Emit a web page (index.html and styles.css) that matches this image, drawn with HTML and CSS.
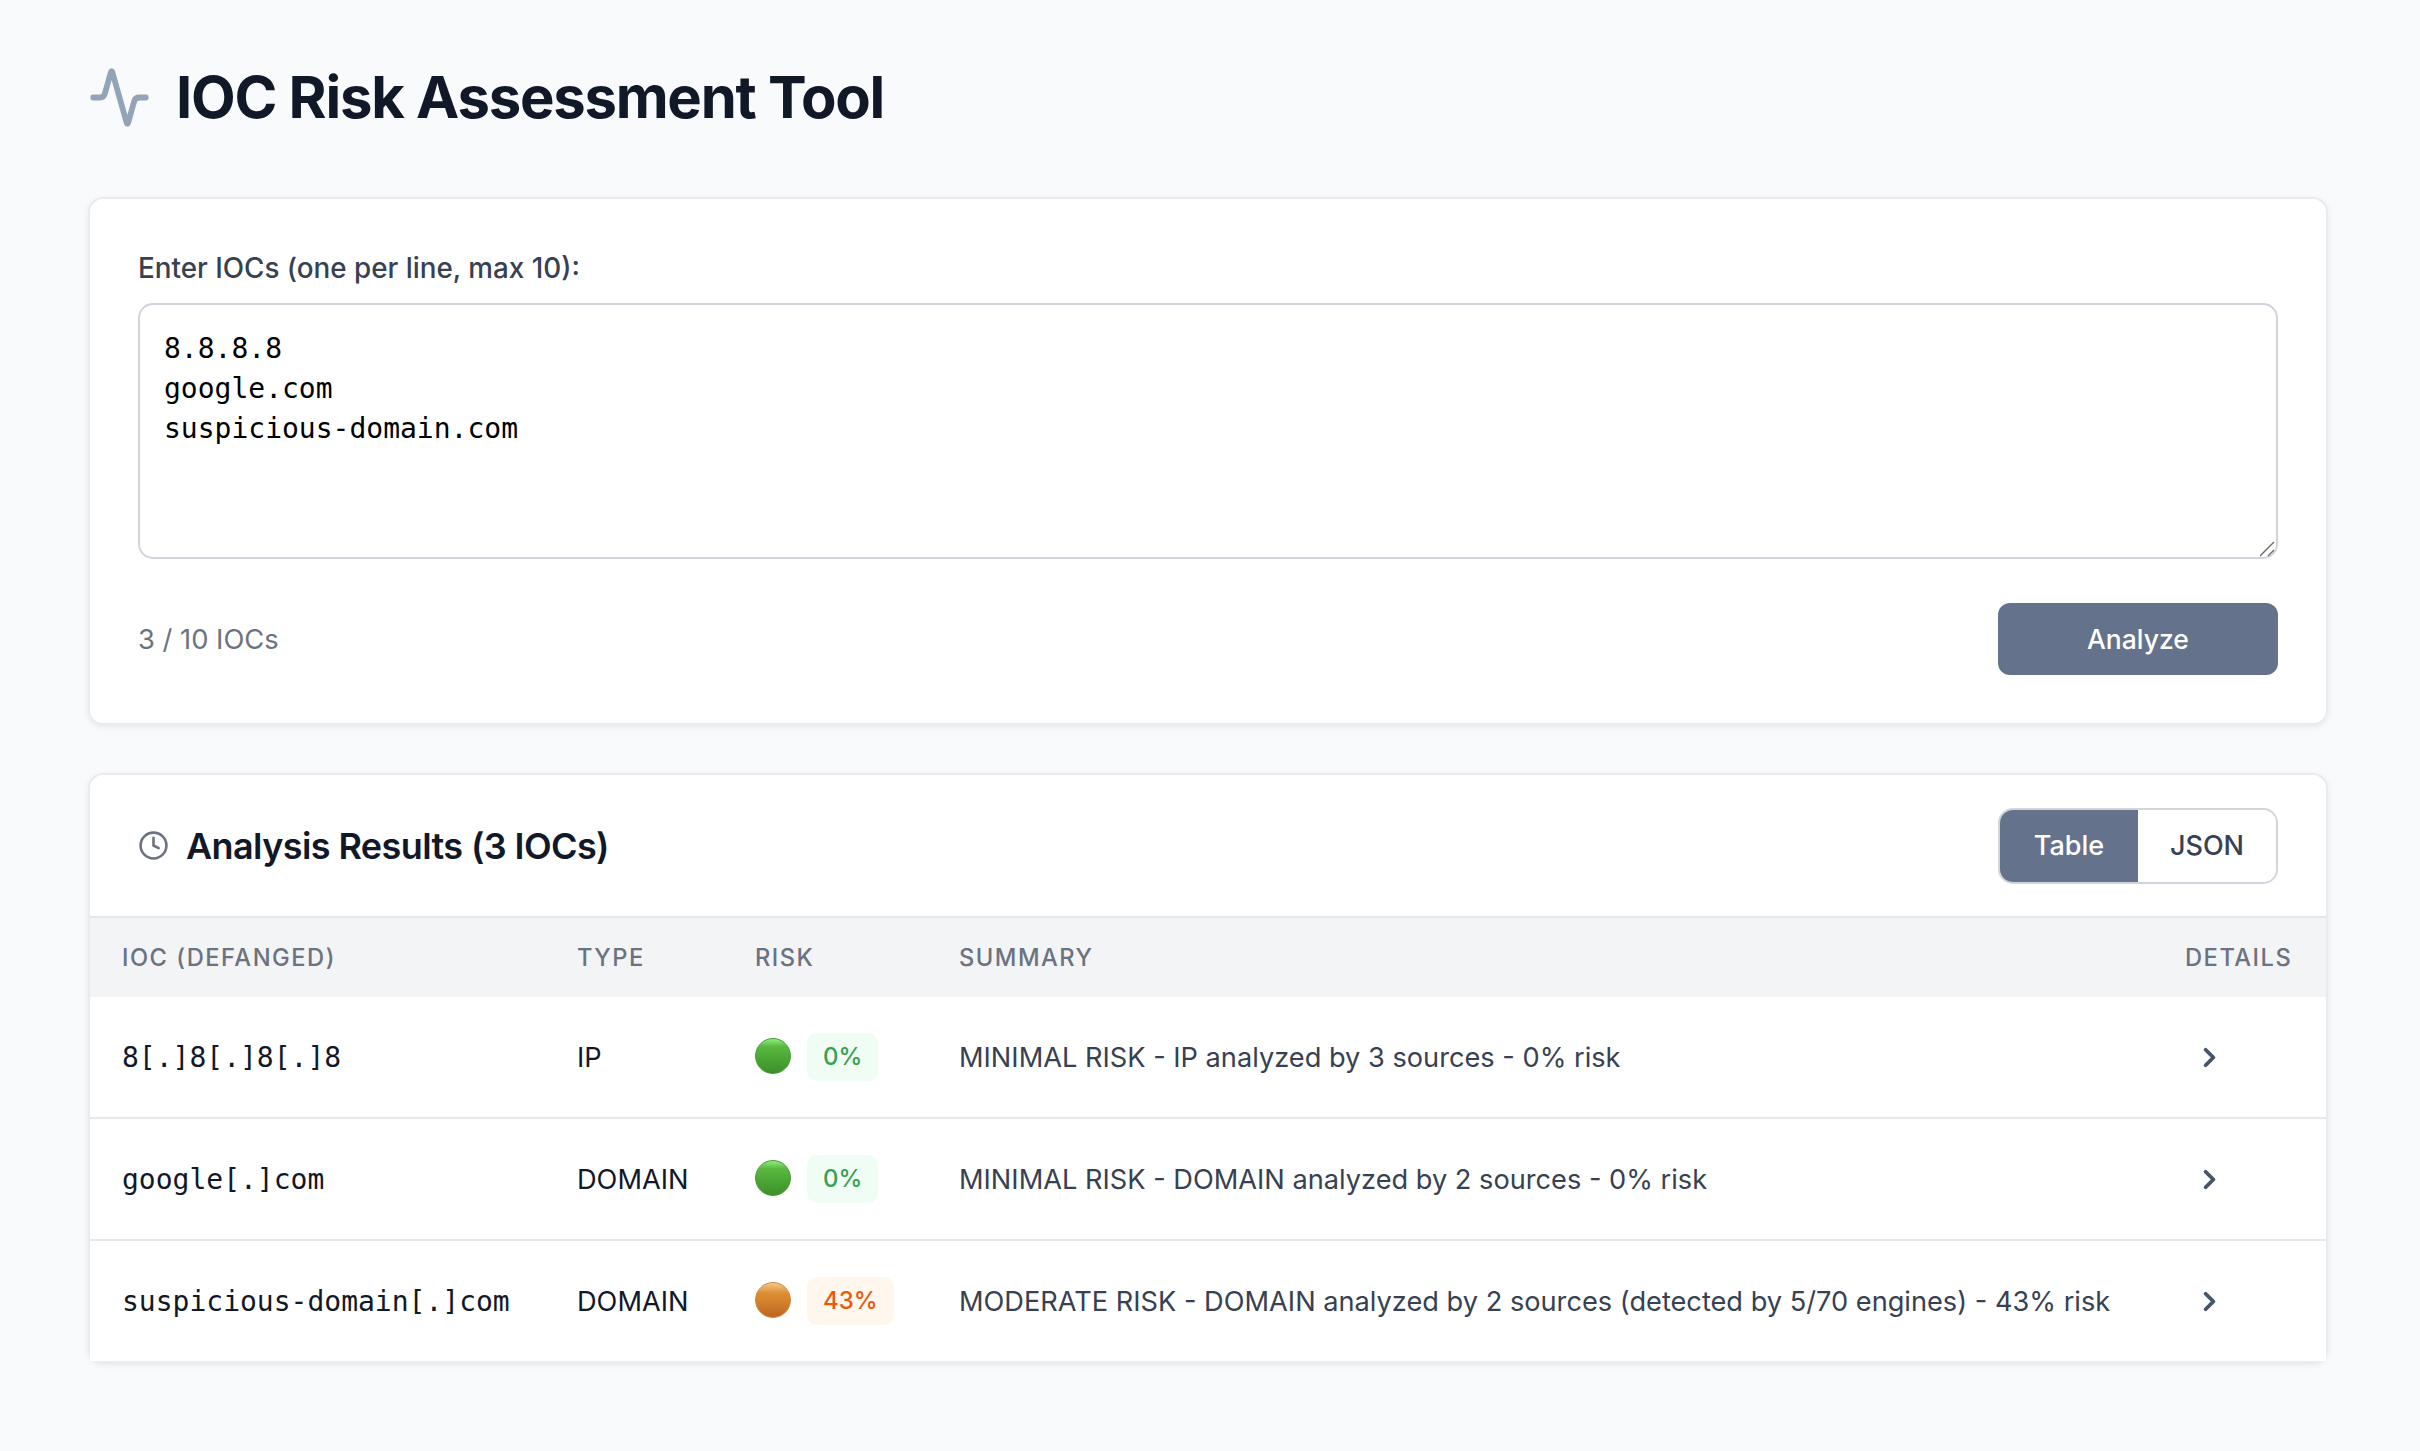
FILE: index.html
```html
<!DOCTYPE html>
<html lang="en">
  <head>
    <meta charset="UTF-8" />
    <meta name="viewport" content="width=device-width, initial-scale=1.0" />
    <title>IOC Risk Assessment Tool</title>
    <link rel="stylesheet" href="styles.css">
  </head>
  <body>
    <main class="page">
      <header class="page-header">
        <svg class="icon-pulse" viewBox="0 0 24 24" fill="none" stroke="currentColor" stroke-width="2.2" stroke-linecap="round" stroke-linejoin="round">
          <path d="M22 12h-2.48a2 2 0 0 0-1.93 1.46l-2.35 8.36a.25.25 0 0 1-.48 0L9.24 2.18a.25.25 0 0 0-.48 0l-2.35 8.36A2 2 0 0 1 4.49 12H2" />
        </svg>
        <h1>IOC Risk Assessment Tool</h1>
      </header>

      <section class="card card-input">
        <label class="input-label" for="iocs">Enter IOCs (one per line, max 10):</label>
        <div class="input-wrap">
          <textarea id="iocs" class="ioc-input" spellcheck="false">8.8.8.8
google.com
suspicious-domain.com</textarea>
          <svg class="resize-grip" viewBox="0 0 16 16" fill="none" stroke="#6b6b6b" stroke-width="1.4">
            <path d="M0 15 14 1M8 15l6-6" />
          </svg>
        </div>
        <div class="input-footer">
          <span class="ioc-count">3 / 10 IOCs</span>
          <button type="button" class="btn-analyze">Analyze</button>
        </div>
      </section>

      <section class="card card-results">
        <div class="results-header">
          <h2 class="results-title">
            <svg class="icon-clock" viewBox="0 0 24 24" fill="none" stroke="currentColor" stroke-width="2" stroke-linecap="round" stroke-linejoin="round">
              <circle cx="12" cy="12" r="10" />
              <polyline points="12 6 12 12 16 14" />
            </svg>
            Analysis Results (3 IOCs)
          </h2>
          <div class="view-toggle">
            <button type="button" class="toggle-btn active">Table</button>
            <button type="button" class="toggle-btn">JSON</button>
          </div>
        </div>

        <table class="results-table">
          <colgroup>
            <col class="col-ioc" />
            <col class="col-type" />
            <col class="col-risk" />
            <col class="col-summary" />
            <col class="col-details" />
          </colgroup>
          <thead>
            <tr>
              <th>IOC (Defanged)</th>
              <th>Type</th>
              <th>Risk</th>
              <th>Summary</th>
              <th>Details</th>
            </tr>
          </thead>
          <tbody>
            <tr>
              <td class="cell-ioc">8[.]8[.]8[.]8</td>
              <td class="cell-type">IP</td>
              <td>
                <div class="risk">
                  <span class="dot dot-green"></span>
                  <span class="badge badge-green">0%</span>
                </div>
              </td>
              <td class="cell-summary">MINIMAL RISK - IP analyzed by 3 sources - 0% risk</td>
              <td class="cell-details">
                <svg class="icon-chevron" viewBox="0 0 24 24" fill="none" stroke="currentColor" stroke-width="3" stroke-linecap="round" stroke-linejoin="round"><path d="m9 18 6-6-6-6" /></svg>
              </td>
            </tr>
            <tr>
              <td class="cell-ioc">google[.]com</td>
              <td class="cell-type">DOMAIN</td>
              <td>
                <div class="risk">
                  <span class="dot dot-green"></span>
                  <span class="badge badge-green">0%</span>
                </div>
              </td>
              <td class="cell-summary">MINIMAL RISK - DOMAIN analyzed by 2 sources - 0% risk</td>
              <td class="cell-details">
                <svg class="icon-chevron" viewBox="0 0 24 24" fill="none" stroke="currentColor" stroke-width="3" stroke-linecap="round" stroke-linejoin="round"><path d="m9 18 6-6-6-6" /></svg>
              </td>
            </tr>
            <tr>
              <td class="cell-ioc">suspicious-domain[.]com</td>
              <td class="cell-type">DOMAIN</td>
              <td>
                <div class="risk">
                  <span class="dot dot-orange"></span>
                  <span class="badge badge-orange">43%</span>
                </div>
              </td>
              <td class="cell-summary">MODERATE RISK - DOMAIN analyzed by 2 sources (detected by 5/70 engines) - 43% risk</td>
              <td class="cell-details">
                <svg class="icon-chevron" viewBox="0 0 24 24" fill="none" stroke="currentColor" stroke-width="3" stroke-linecap="round" stroke-linejoin="round"><path d="m9 18 6-6-6-6" /></svg>
              </td>
            </tr>
          </tbody>
        </table>
      </section>
    </main>
  </body>
</html>
```

FILE: styles.css
```css
* {
  box-sizing: border-box;
}

body {
  margin: 0;
  min-height: 1451px;
  background-color: #f9fafb;
  color: #111827;
  font-family: Inter, "Liberation Sans", sans-serif;
}

.page {
  padding: 66px 92px 0 88px;
}

.page-header {
  display: flex;
  align-items: center;
  gap: 25px;
  height: 62px;
  margin-bottom: 69px;
}

.icon-pulse {
  width: 63px;
  height: 63px;
  color: #94a3b8;
}

h1 {
  margin: 0;
  font-size: 58px;
  font-weight: 700;
  letter-spacing: -1.25px;
}

.card {
  background-color: #fff;
  border: 2px solid #e9ebef;
  border-radius: 15px;
  box-shadow: 0 2px 6px rgba(0, 0, 0, 0.08);
}

.card-input {
  margin-bottom: 48px;
  padding: 49px 48px 48px;
}

.input-label {
  display: block;
  margin-bottom: 15px;
  color: #374151;
  font-size: 27.8px;
  font-weight: 500;
  line-height: 40px;
}

.input-wrap {
  position: relative;
}

.ioc-input {
  display: block;
  width: 100%;
  height: 256px;
  padding: 24px;
  border: 2px solid #d1d5db;
  border-radius: 15px;
  color: #000;
  font-family: "DejaVu Sans Mono", monospace;
  font-size: 28px;
  line-height: 40px;
  outline: none;
  resize: none;
}

.resize-grip {
  position: absolute;
  right: 2px;
  bottom: 2px;
  width: 16px;
  height: 16px;
}

.input-footer {
  display: flex;
  align-items: center;
  justify-content: space-between;
  margin-top: 44px;
}

.ioc-count {
  color: #6b7280;
  font-size: 27.3px;
}

.btn-analyze {
  width: 280px;
  height: 72px;
  border: none;
  border-radius: 12px;
  background-color: #65728b;
  color: #fff;
  font-family: inherit;
  font-size: 26.5px;
  font-weight: 500;
}

.results-header {
  display: flex;
  align-items: center;
  justify-content: space-between;
  height: 141px;
  padding: 0 48px;
}

.results-title {
  display: flex;
  align-items: center;
  gap: 17px;
  margin: 0;
  font-size: 36px;
  font-weight: 600;
  letter-spacing: -0.6px;
}

.icon-clock {
  width: 31px;
  height: 31px;
  color: #6b7280;
}

.view-toggle {
  display: flex;
  width: 280px;
  height: 76px;
  overflow: hidden;
  border: 2px solid #d1d5db;
  border-radius: 15px;
}

.toggle-btn {
  flex: 1;
  border: none;
  background-color: #fff;
  color: #374151;
  font-family: inherit;
  font-size: 27px;
  font-weight: 500;
}

.toggle-btn.active {
  background-color: #65728b;
  color: #fff;
}

.results-table {
  width: 100%;
  border-collapse: separate;
  border-spacing: 0;
  background-color: #fff;
  table-layout: fixed;
}

.col-ioc {
  width: 455px;
}

.col-type {
  width: 178px;
}

.col-risk {
  width: 204px;
}

.col-details {
  width: 173px;
}

.results-table th {
  height: 81px;
  padding: 0 32px;
  border-top: 2px solid #e5e7eb;
  background-color: #f3f4f6;
  color: #6b7280;
  font-size: 23.7px;
  font-weight: 500;
  letter-spacing: 1.5px;
  text-align: left;
  text-transform: uppercase;
  white-space: nowrap;
}

.results-table td {
  height: 122px;
  padding: 0 32px;
  border-top: 2px solid #e5e7eb;
  font-size: 27.2px;
  white-space: nowrap;
}

.results-table tbody tr:first-child td {
  height: 120px;
  border-top: none;
}

.results-table .cell-ioc {
  font-family: "DejaVu Sans Mono", monospace;
  font-size: 28px;
}

.cell-summary {
  color: #374151;
}

.cell-details {
  color: #475569;
}

.risk {
  display: flex;
  align-items: center;
  gap: 16px;
}

.dot {
  width: 36px;
  height: 36px;
  margin-bottom: 3px;
  border-radius: 50%;
}

.dot-green {
  border: 1px solid #4a9a3c;
  background: linear-gradient(#8cf076, #5cb843 22%, #4ba834 55%, #3f8f2b);
}

.dot-orange {
  border: 1px solid #d2893c;
  background: linear-gradient(#f2c986, #dd8d33 30%, #d17f2b 60%, #bd6423);
}

.badge {
  padding: 0 16px;
  border-radius: 10px;
  font-size: 24px;
  font-weight: 500;
  line-height: 48px;
}

.badge-green {
  background-color: #f0fdf4;
  color: #38a14f;
}

.badge-orange {
  background-color: #fff7ed;
  color: #ea580c;
}

.icon-chevron {
  display: block;
  width: 31px;
  height: 31px;
  margin-left: 9px;
}
```
